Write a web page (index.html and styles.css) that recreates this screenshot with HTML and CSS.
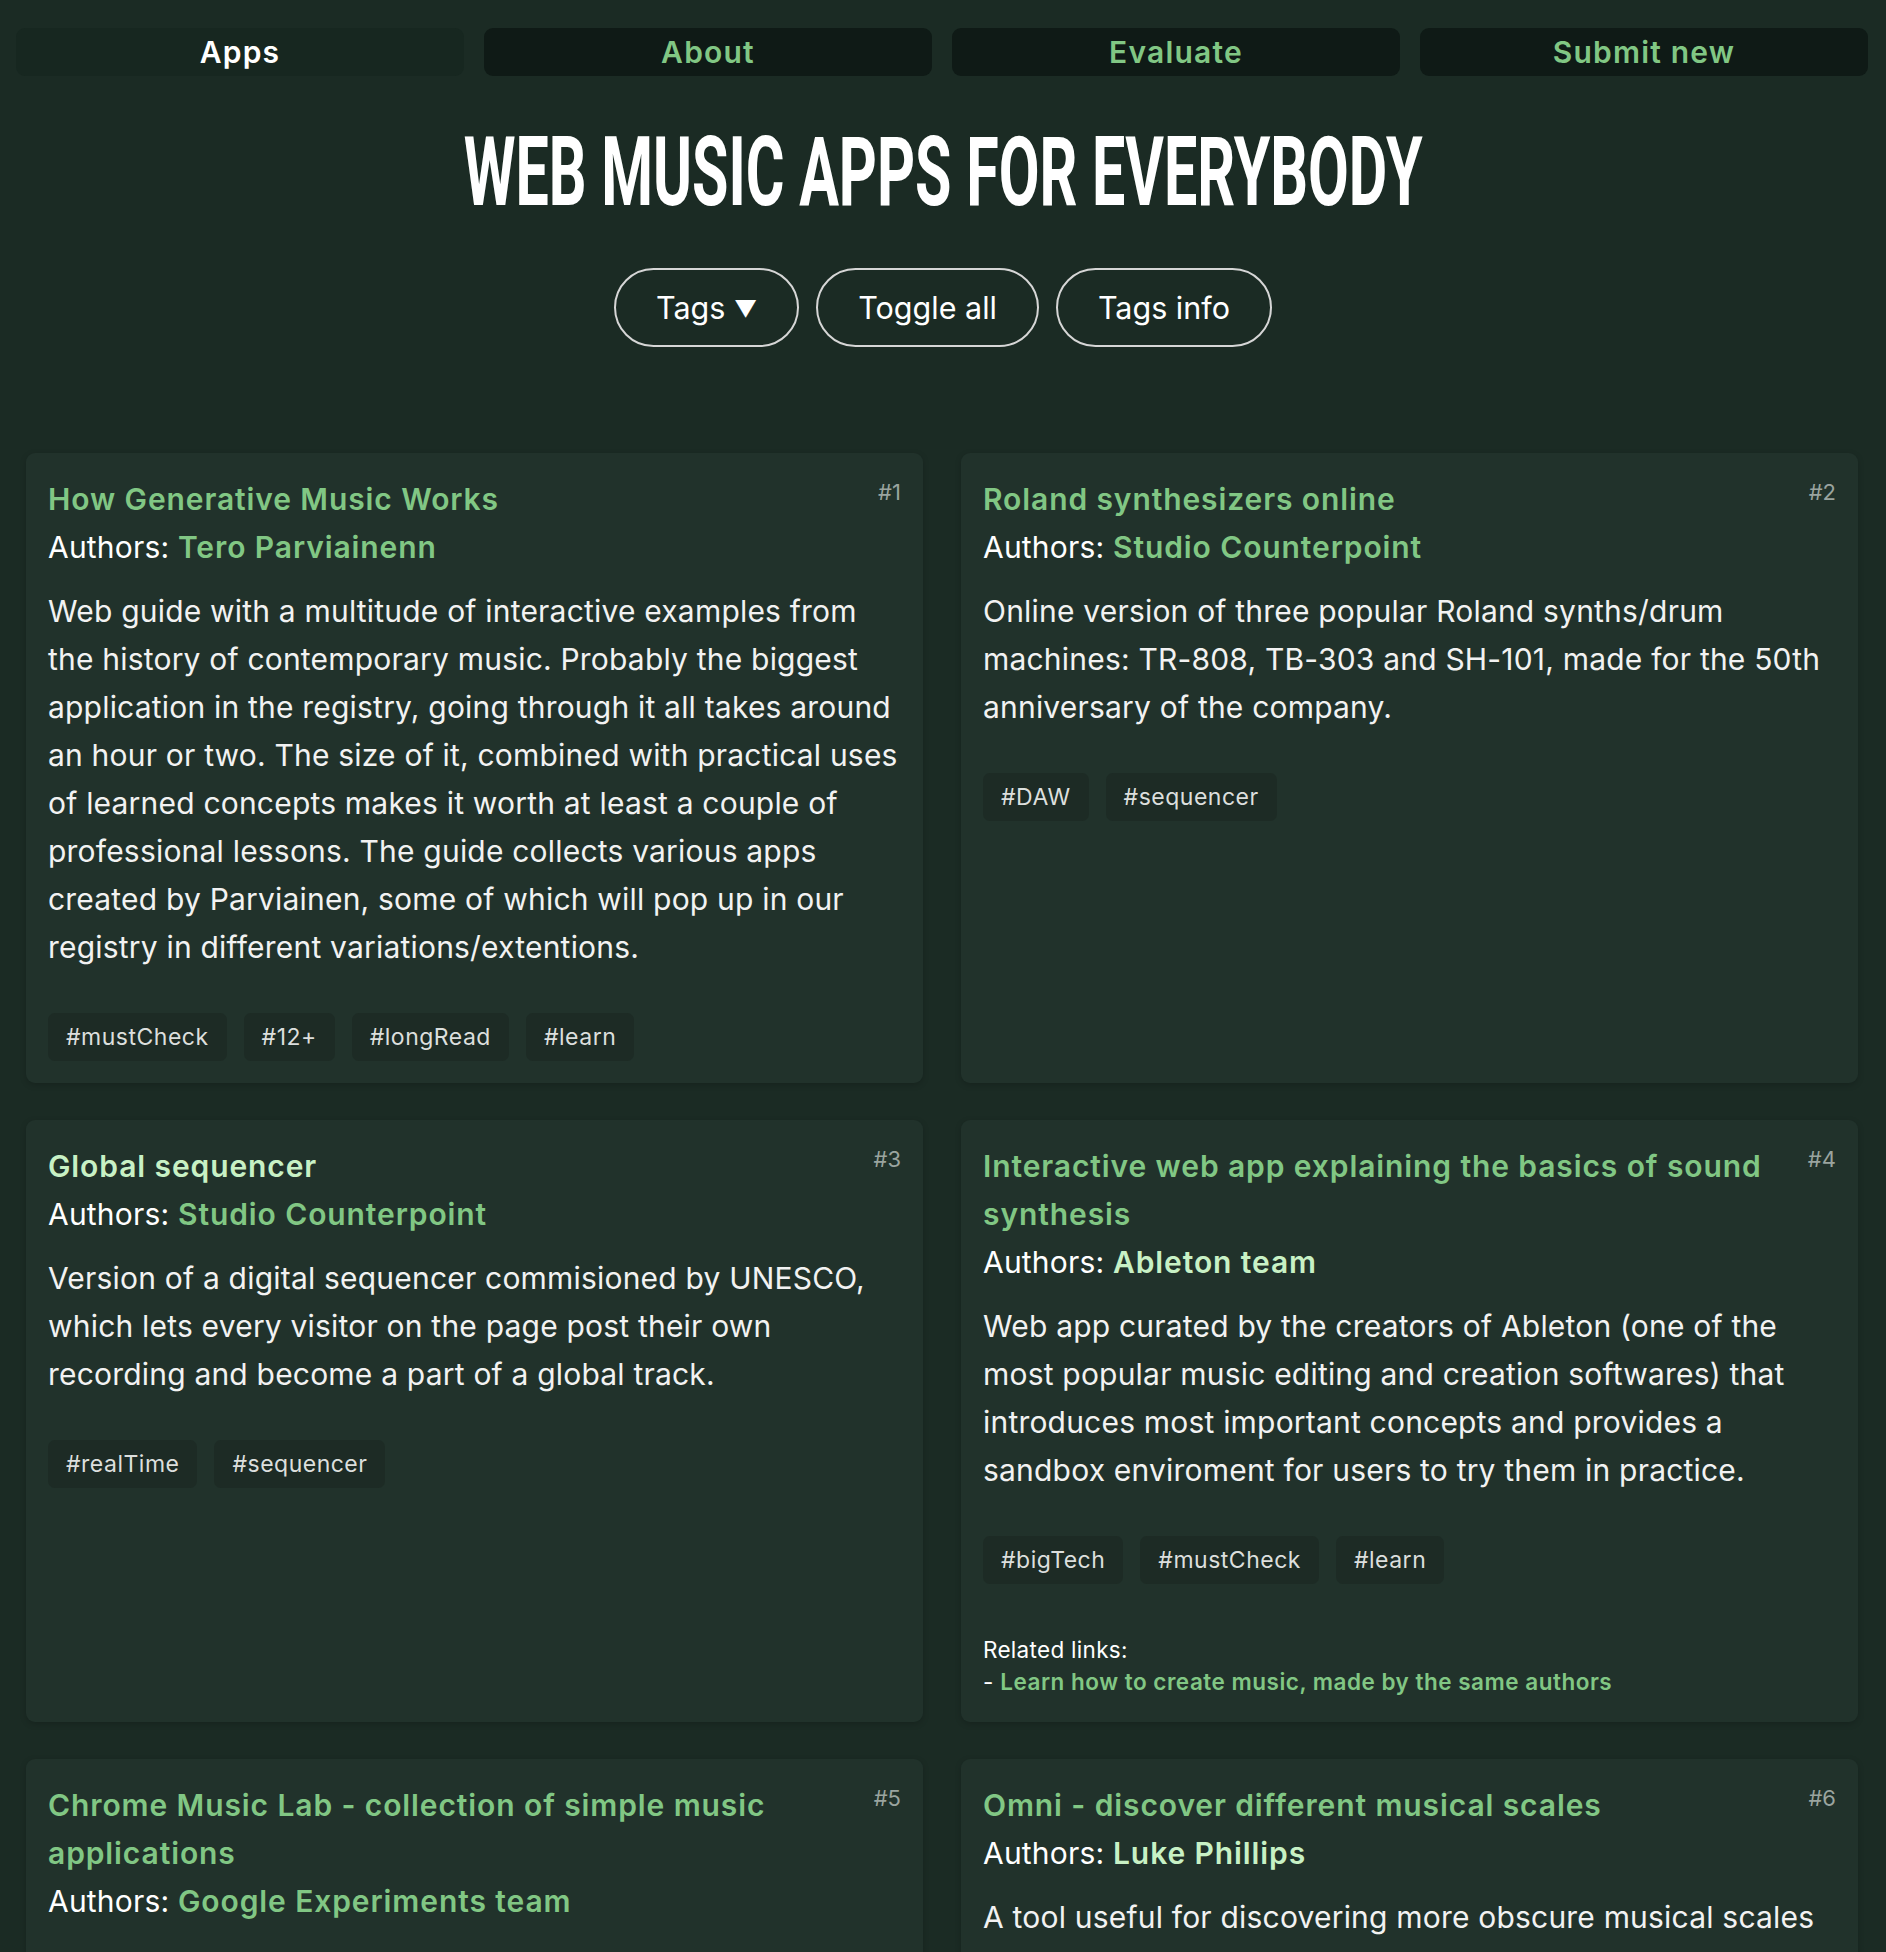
FILE: index.html
```html
<!DOCTYPE html>
<html lang="en">
<head>
<meta charset="utf-8">
<title>Web music apps for everybody</title>
<link rel="stylesheet" href="styles.css">
</head>
<body>
<nav class="nav">
  <a class="nav-btn nav-btn--active" href="#">Apps</a>
  <a class="nav-btn" href="#">About</a>
  <a class="nav-btn" href="#">Evaluate</a>
  <a class="nav-btn" href="#">Submit new</a>
</nav>

<header class="hero">
  <h1 class="hero-title"><span class="hero-title-inner">WEB MUSIC APPS FOR EVERYBODY</span></h1>
  <div class="filters">
    <button class="pill">Tags <span class="pill-caret">▼</span></button>
    <button class="pill">Toggle all</button>
    <button class="pill">Tags info</button>
  </div>
</header>

<main class="grid">
  <article class="card">
    <div class="card-head">
      <a class="card-title" href="#">How Generative Music Works</a>
      <span class="card-num">#1</span>
    </div>
    <div class="authors">Authors: <a class="author" href="#">Tero Parviainenn</a></div>
    <p class="desc">Web guide with a multitude of interactive examples from the history of contemporary music. Probably the biggest application in the registry, going through it all takes around an hour or two. The size of it, combined with practical uses of learned concepts makes it worth at least a couple of professional lessons. The guide collects various apps created by Parviainen, some of which will pop up in our registry in different variations/extentions.</p>
    <div class="tags"><span class="tag">#mustCheck</span><span class="tag">#12+</span><span class="tag">#longRead</span><span class="tag">#learn</span></div>
  </article>

  <article class="card">
    <div class="card-head">
      <a class="card-title" href="#">Roland synthesizers online</a>
      <span class="card-num">#2</span>
    </div>
    <div class="authors">Authors: <a class="author" href="#">Studio Counterpoint</a></div>
    <p class="desc">Online version of three popular Roland synths/drum machines: TR-808, TB-303 and SH-101, made for the 50th anniversary of the company.</p>
    <div class="tags"><span class="tag">#DAW</span><span class="tag">#sequencer</span></div>
  </article>

  <article class="card">
    <div class="card-head">
      <a class="card-title card-title--visited" href="#">Global sequencer</a>
      <span class="card-num">#3</span>
    </div>
    <div class="authors">Authors: <a class="author" href="#">Studio Counterpoint</a></div>
    <p class="desc">Version of a digital sequencer commisioned by UNESCO, which lets every visitor on the page post their own recording and become a part of a global track.</p>
    <div class="tags"><span class="tag">#realTime</span><span class="tag">#sequencer</span></div>
  </article>

  <article class="card">
    <div class="card-head">
      <a class="card-title" href="#">Interactive web app explaining the basics of sound synthesis</a>
      <span class="card-num">#4</span>
    </div>
    <div class="authors">Authors: <a class="author author--visited" href="#">Ableton team</a></div>
    <p class="desc">Web app curated by the creators of Ableton (one of the most popular music editing and creation softwares) that introduces most important concepts and provides a sandbox enviroment for users to try them in practice.</p>
    <div class="tags"><span class="tag">#bigTech</span><span class="tag">#mustCheck</span><span class="tag">#learn</span></div>
    <div class="related">
      <div>Related links:</div>
      <div>- <a class="related-link" href="#">Learn how to create music, made by the same authors</a></div>
    </div>
  </article>

  <article class="card">
    <div class="card-head">
      <a class="card-title" href="#">Chrome Music Lab - collection of simple music applications</a>
      <span class="card-num">#5</span>
    </div>
    <div class="authors">Authors: <a class="author" href="#">Google Experiments team</a></div>
  </article>

  <article class="card">
    <div class="card-head">
      <a class="card-title" href="#">Omni - discover different musical scales</a>
      <span class="card-num">#6</span>
    </div>
    <div class="authors">Authors: <a class="author author--visited" href="#">Luke Phillips</a></div>
    <p class="desc">A tool useful for discovering more obscure musical scales</p>
  </article>
</main>
</body>
</html>
```

FILE: styles.css
```css
* { box-sizing: border-box; }

html, body {
  margin: 0;
  padding: 0;
  background: #1b2b24;
  color: #f2f2f2;
  font-family: Inter, "Noto Sans", "Liberation Sans", sans-serif;
}

a { text-decoration: none; }

.nav {
  display: grid;
  grid-template-columns: repeat(4, 1fr);
  gap: 20px;
  padding: 28px 18px 0 16px;
}

.nav-btn {
  height: 48px;
  display: flex;
  align-items: center;
  justify-content: center;
  border-radius: 9px;
  background: #0f1a16;
  color: #81c784;
  font-size: 30px;
  font-weight: 600;
  letter-spacing: 1.2px;
}

.nav-btn--active {
  background: #172720;
  color: #ffffff;
}

.hero {
  text-align: center;
}

.hero-title {
  margin: 48px 0 0;
  height: 96px;
  font-family: Roboto, "Liberation Sans", sans-serif;
  font-size: 96px;
  line-height: 96px;
  font-weight: 700;
  color: #ffffff;
  white-space: nowrap;
}

.hero-title-inner {
  display: inline-block;
  transform: scaleX(0.616);
  transform-origin: center;
}

.filters {
  display: flex;
  justify-content: center;
  gap: 17px;
  margin-top: 48px;
}

.pill {
  height: 79px;
  padding: 0 40px;
  border: 2px solid #d6d6d6;
  border-radius: 40px;
  background: transparent;
  color: #ffffff;
  font-family: Inter, "Noto Sans", sans-serif;
  font-size: 30.5px;
  font-weight: 400;
}

.pill-caret {
  font-size: 23px;
  vertical-align: 2px;
}

.grid {
  display: grid;
  grid-template-columns: 1fr 1fr;
  column-gap: 38px;
  row-gap: 37px;
  padding: 106px 28px 40px 26px;
}

.card {
  background: #21322b;
  border-radius: 9px;
  padding: 22px;
  box-shadow: 0 2px 6px rgba(0, 0, 0, 0.18);
}

.card-head {
  display: flex;
  align-items: flex-start;
  gap: 24px;
}

.card-title {
  flex: 1;
  font-size: 30px;
  line-height: 48px;
  font-weight: 600;
  letter-spacing: 0.9px;
  color: #81c784;
}

.card-title--visited { color: #c8f1c5; }

.card-num {
  flex: none;
  font-size: 22px;
  line-height: 35px;
  color: #9aa49f;
}

.authors {
  font-size: 30px;
  line-height: 48px;
  letter-spacing: 0.2px;
  color: #ffffff;
}

.author {
  font-weight: 600;
  letter-spacing: 0.9px;
  color: #81c784;
}

.author--visited { color: #c8f1c5; }

.desc {
  margin: 16px 0 0;
  font-size: 30px;
  line-height: 48px;
  letter-spacing: 0.2px;
  color: #f2f2f2;
}

.tags {
  display: flex;
  flex-wrap: wrap;
  gap: 17px;
  margin-top: 42px;
}

.tag {
  height: 48px;
  display: inline-flex;
  align-items: center;
  padding: 0 18px;
  border-radius: 7px;
  background: #1d2b25;
  color: #dcdfdd;
  font-size: 23px;
  letter-spacing: 0.5px;
}

.related {
  margin-top: 50px;
  padding-bottom: 2px;
  font-size: 22.5px;
  line-height: 32px;
  letter-spacing: 0.3px;
  color: #ffffff;
}

.related-link {
  font-weight: 600;
  letter-spacing: 0.5px;
  color: #81c784;
}
```
